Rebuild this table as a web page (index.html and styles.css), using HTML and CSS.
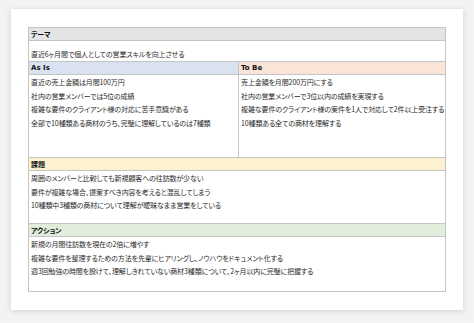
FILE: index.html
```html
<!DOCTYPE html>
<html lang="ja">
<head>
<meta charset="utf-8">
<link rel="stylesheet" href="styles.css">
</head>
<body>
<div class="card">
  <div class="sheet">
    <div class="head head-gray">テーマ</div>
    <div class="theme">直近6ヶ月間で個人としての営業スキルを向上させる</div>
    <div class="split">
      <div class="col">
        <div class="head head-blue latin">As Is</div>
        <div class="lines">
          <div class="line">直近の売上金額は月間100万円</div>
          <div class="line">社内の営業メンバーでは5位の成績</div>
          <div class="line">複雑な要件のクライアント様の対応に苦手意識がある</div>
          <div class="line">全部で10種類ある商材のうち、完璧に理解しているのは7種類</div>
        </div>
      </div>
      <div class="col col-right">
        <div class="head head-peach latin">To Be</div>
        <div class="lines">
          <div class="line">売上金額を月間200万円にする</div>
          <div class="line">社内の営業メンバーで3位以内の成績を実現する</div>
          <div class="line">複雑な要件のクライアント様の案件を1人で対応して2件以上受注する</div>
          <div class="line">10種類ある全ての商材を理解する</div>
        </div>
      </div>
    </div>
    <div class="head head-yellow">課題</div>
    <div class="lines block-issue">
      <div class="line">周囲のメンバーと比較しても新規顧客への往訪数が少ない</div>
      <div class="line">要件が複雑な場合、提案すべき内容を考えると混乱してしまう</div>
      <div class="line">10種類中3種類の商材について理解が曖昧なまま営業をしている</div>
    </div>
    <div class="head head-green">アクション</div>
    <div class="lines block-action">
      <div class="line">新規の月間往訪数を現在の2倍に増やす</div>
      <div class="line">複雑な要件を整理するための方法を先輩にヒアリングし、ノウハウをドキュメント化する</div>
      <div class="line">週3回勉強の時間を設けて、理解しきれていない商材3種類について、2ヶ月以内に完璧に把握する</div>
    </div>
  </div>
</div>
</body>
</html>
```
FILE: styles.css
```css
html, body {
  margin: 0;
  padding: 0;
}
body {
  background: #f3f3f3;
  width: 474px;
  height: 323px;
  overflow: hidden;
  font-family: "Noto Sans CJK JP", "Noto Sans", sans-serif;
  font-feature-settings: "palt";
  font-size: 7px;
  letter-spacing: -0.12px;
  color: #2a2a2a;
}
.card {
  margin: 9px 0 0 11px;
  width: 452px;
  height: 301px;
  background: #ffffff;
  box-shadow: 0 1px 6px rgba(0, 0, 0, 0.14);
  padding: 18px 17px 0 17px;
  box-sizing: border-box;
}
.sheet {
  border: 1px solid #c4c4c4;
  display: flex;
  flex-direction: column;
  height: 265px;
  box-sizing: border-box;
}
.head {
  height: 12px;
  line-height: 12px;
  padding-left: 2px;
  font-weight: bold;
  color: #111;
  border-bottom: 1px solid #c4c4c4;
  flex: none;
}
.latin {
  font-family: "DejaVu Sans", "Noto Sans CJK JP", sans-serif;
  font-size: 7px;
  letter-spacing: 0;
}
.head-gray { background: #e4e4e4; }
.head-blue { background: #dae1f1; }
.head-peach { background: #fae3d7; }
.head-yellow { background: #fdf1cf; }
.head-green { background: #e2eedb; }
.theme {
  height: 20px;
  display: flex;
  align-items: flex-end;
  padding-left: 2px;
  line-height: 14px;
  border-bottom: 1px solid #c4c4c4;
  flex: none;
}
.split {
  display: flex;
  height: 95px;
  border-bottom: 1px solid #c4c4c4;
  flex: none;
}
.col {
  flex: 0 0 209px;
}
.col-right {
  flex: 1;
  border-left: 1px solid #c4c4c4;
}
.lines {
  padding-left: 2px;
  padding-top: 1px;
}
.line {
  height: 13.7px;
  line-height: 13.7px;
  white-space: nowrap;
}
.block-issue {
  height: 53px;
  border-bottom: 1px solid #c4c4c4;
  flex: none;
  box-sizing: border-box;
  padding-top: 1px;
}
.block-action {
  flex: 1;
  padding-top: 1px;
}
```
